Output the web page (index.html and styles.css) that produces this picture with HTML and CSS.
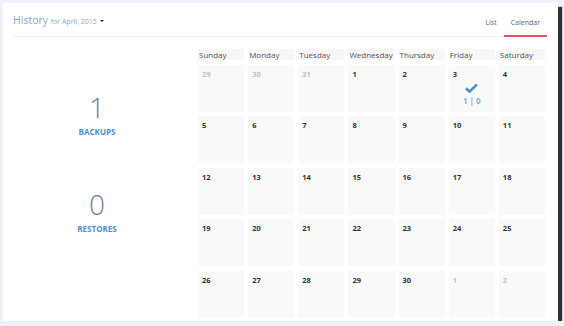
FILE: index.html
```html
<!DOCTYPE html>
<html lang="en">
<head>
    <meta charset="UTF-8">
    <title>History</title>
    <link rel="stylesheet" href="styles.css">
</head>
<body>
    <div class="window">
        <div class="page-header">
            <h1>History <span class="period">for April, 2015</span> <span class="caret"></span></h1>
            <ul class="tabs">
                <li>List</li>
                <li class="active">Calendar</li>
            </ul>
        </div>

        <div class="content">
            <div class="stats">
                <div class="stat">
                    <div class="stat-num">1</div>
                    <div class="stat-label">BACKUPS</div>
                </div>
                <div class="stat">
                    <div class="stat-num">0</div>
                    <div class="stat-label">RESTORES</div>
                </div>
            </div>

            <div class="calendar">
                <div class="dow">Sunday</div>
                <div class="dow">Monday</div>
                <div class="dow">Tuesday</div>
                <div class="dow">Wednesday</div>
                <div class="dow">Thursday</div>
                <div class="dow">Friday</div>
                <div class="dow">Saturday</div>

                <div class="day other">29</div>
                <div class="day other">30</div>
                <div class="day other">31</div>
                <div class="day">1</div>
                <div class="day">2</div>
                <div class="day">3
                    <div class="event">
                        <svg width="13" height="10" viewBox="0 0 13 10"><path d="M1 5.2 L4.6 8.6 L12 1.4" fill="none" stroke="#4a8fd4" stroke-width="2.6"/></svg>
                        <span>1 | 0</span>
                    </div>
                </div>
                <div class="day">4</div>

                <div class="day">5</div>
                <div class="day">6</div>
                <div class="day">7</div>
                <div class="day">8</div>
                <div class="day">9</div>
                <div class="day">10</div>
                <div class="day">11</div>

                <div class="day">12</div>
                <div class="day">13</div>
                <div class="day">14</div>
                <div class="day">15</div>
                <div class="day">16</div>
                <div class="day">17</div>
                <div class="day">18</div>

                <div class="day">19</div>
                <div class="day">20</div>
                <div class="day">21</div>
                <div class="day">22</div>
                <div class="day">23</div>
                <div class="day">24</div>
                <div class="day">25</div>

                <div class="day">26</div>
                <div class="day">27</div>
                <div class="day">28</div>
                <div class="day">29</div>
                <div class="day">30</div>
                <div class="day other">1</div>
                <div class="day other">2</div>
            </div>
        </div>
    </div>
</body>
</html>
```

FILE: styles.css
```css
body {
    margin: 0;
    padding: 0;
    background-color: #eef1f8;
    font-family: "Open Sans", "Liberation Sans", sans-serif;
}

.window {
    margin: 3px 0 0 3px;
    width: 555px;
    height: 318px;
    background-color: #fff;
    box-shadow: 4px 4px 1px rgba(0, 0, 0, 0.8);
    padding: 0 13px 0 10px;
    box-sizing: border-box;
    overflow: hidden;
}

.page-header {
    display: flex;
    justify-content: space-between;
    align-items: flex-end;
    height: 33px;
    border-bottom: 1px solid #f0f0f0;
    margin-right: -2px;
}

.page-header h1 {
    margin: 0 0 7px 0;
    font-size: 10.5px;
    font-weight: normal;
    color: #8ea7c7;
    line-height: 14px;
}

.period {
    font-size: 7px;
    color: #8ea7c7;
}

.caret {
    display: inline-block;
    width: 0;
    height: 0;
    border-left: 2.5px solid transparent;
    border-right: 2.5px solid transparent;
    border-top: 2.5px solid #222;
    vertical-align: middle;
    margin-left: 1px;
}

.tabs {
    list-style: none;
    margin: 0;
    padding: 0;
    display: flex;
}

.tabs li {
    font-size: 7px;
    color: #666;
    padding: 0 7px 7px 7px;
    line-height: 10px;
    border-bottom: 2px solid transparent;
    margin-bottom: -1px;
}

.tabs li.active {
    border-bottom-color: #e8505b;
}

.content {
    display: grid;
    grid-template-columns: 168px 347px;
    column-gap: 17px;
    margin-top: 12px;
}

.stats {
    text-align: center;
    padding-top: 43px;
}

.stat {
    height: 97px;
}

.stat-num {
    font-size: 28px;
    font-weight: 300;
    color: #6f8199;
    line-height: 30px;
}

.stat-label {
    font-size: 8px;
    font-weight: bold;
    color: #4a8fd4;
    margin-top: 4px;
}

.calendar {
    display: grid;
    grid-template-columns: repeat(7, 1fr);
    grid-template-rows: 11px repeat(5, 47px);
    column-gap: 4px;
    row-gap: 4.6px;
}

.dow {
    background-color: #f7f7f7;
    font-size: 8px;
    color: #555;
    line-height: 11px;
    padding-left: 1px;
}

.day {
    background-color: #f9f9f9;
    font-size: 7.5px;
    font-weight: bold;
    color: #333;
    padding: 4px 0 0 4px;
    box-sizing: border-box;
}

.day.other {
    color: #b7c2cf;
}

.event {
    display: flex;
    flex-direction: column;
    align-items: center;
    margin: 4px 0 0 -4px;
}

.event span {
    font-size: 8px;
    color: #7fb3e3;
    margin-top: 2px;
}
```
